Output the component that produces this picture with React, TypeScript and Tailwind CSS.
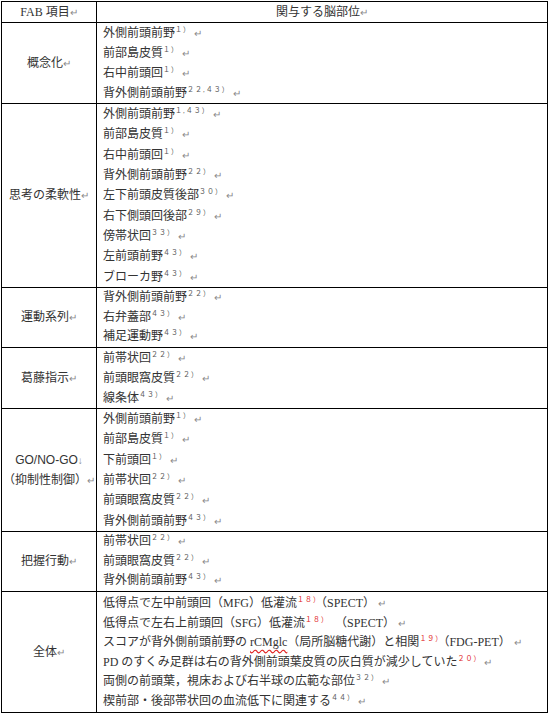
const serif = { fontFamily: '"Liberation Serif", "Noto Sans CJK JP", serif' };

type Item = { text: string; sup: string };

const rows: { label: string; lh: number; items: Item[] }[] = [
  {
    label: "概念化",
    lh: 20,
    items: [
      { text: "外側前頭前野", sup: "１）" },
      { text: "前部島皮質", sup: "１）" },
      { text: "右中前頭回", sup: "１）" },
      { text: "背外側前頭前野", sup: "２２,４３）" },
    ],
  },
  {
    label: "思考の柔軟性",
    lh: 20.33,
    items: [
      { text: "外側前頭前野", sup: "１,４３）" },
      { text: "前部島皮質", sup: "１）" },
      { text: "右中前頭回", sup: "１）" },
      { text: "背外側前頭前野", sup: "２２）" },
      { text: "左下前頭皮質後部", sup: "３０）" },
      { text: "右下側頭回後部", sup: "２９）" },
      { text: "傍帯状回", sup: "３３）" },
      { text: "左前頭前野", sup: "４３）" },
      { text: "ブローカ野", sup: "４３）" },
    ],
  },
  {
    label: "運動系列",
    lh: 19.67,
    items: [
      { text: "背外側前頭前野", sup: "２２）" },
      { text: "右弁蓋部", sup: "４３）" },
      { text: "補足運動野", sup: "４３）" },
    ],
  },
  {
    label: "葛藤指示",
    lh: 20,
    items: [
      { text: "前帯状回", sup: "２２）" },
      { text: "前頭眼窩皮質", sup: "２２）" },
      { text: "線条体", sup: "４３）" },
    ],
  },
  {
    label: "GO",
    lh: 20.33,
    items: [
      { text: "外側前頭前野", sup: "１）" },
      { text: "前部島皮質", sup: "１）" },
      { text: "下前頭回", sup: "１）" },
      { text: "前帯状回", sup: "２２）" },
      { text: "前頭眼窩皮質", sup: "２２）" },
      { text: "背外側前頭前野", sup: "４３）" },
    ],
  },
  {
    label: "把握行動",
    lh: 19.67,
    items: [
      { text: "前帯状回", sup: "２２）" },
      { text: "前頭眼窩皮質", sup: "２２）" },
      { text: "背外側前頭前野", sup: "４３）" },
    ],
  },
];

function Ret() {
  return <span className="ml-[3px] text-[10px] text-[#8a8a8a]">↵</span>;
}

function Mark() {
  return <span className="text-[10px] text-[#8a8a8a]">↵</span>;
}

function Sup({ children, red }: { children: React.ReactNode; red?: boolean }) {
  return (
    <span
      className={`align-super text-[7px] leading-none tracking-[1px] ${red ? "text-[#e02020]" : "text-[#555]"}`}
    >
      {children}
    </span>
  );
}

function Line({ children, lh }: { children: React.ReactNode; lh: number }) {
  // line height differs slightly per row, like the Word table
  return (
    <div className="overflow-visible whitespace-nowrap" style={{ height: lh, lineHeight: `${lh}px` }}>
      {children}
    </div>
  );
}

function Label({ label }: { label: string }) {
  if (label === "GO") {
    return (
      <div className="leading-[20px]">
        <div className="h-[20px]" style={{ fontFamily: '"Liberation Sans", sans-serif' }}>
          GO/NO-GO<span className="text-[10px] text-[#8a8a8a]">↓</span>
        </div>
        <div className="h-[20px] whitespace-nowrap">
          （抑制性制御）
          <Mark />
        </div>
      </div>
    );
  }
  return (
    <div className="h-[20px] leading-[20px]">
      {label}
      <Mark />
    </div>
  );
}

export default function App() {
  return (
    <div className="min-h-[715px] bg-white pt-px pl-px text-[12px] text-[#333]" style={serif}>
      <table className="w-[547px] table-fixed border-collapse border border-black">
        <colgroup>
          <col className="w-[95px]" />
          <col />
        </colgroup>
        <tbody>
          <tr>
            <td className="border border-black p-0 text-center">
              <div className="h-[20px] overflow-hidden leading-[20px]">
                FAB 項目
                <Mark />
              </div>
            </td>
            <td className="border border-black p-0 text-center">
              <div className="h-[20px] overflow-hidden leading-[20px]">
                関与する脳部位
                <Mark />
              </div>
            </td>
          </tr>
          {rows.map((row, i) => (
            <tr key={i}>
              <td className="border border-black p-0 text-center align-middle">
                <Label label={row.label} />
              </td>
              <td className="border border-black py-0 pl-[6px] pr-0">
                {row.items.map((it, j) => (
                  <Line key={j} lh={row.lh}>
                    {it.text}
                    <Sup>{it.sup}</Sup>
                    <Ret />
                  </Line>
                ))}
              </td>
            </tr>
          ))}
          <tr>
            <td className="border border-black p-0 text-center align-middle">
              <div className="h-[20px] leading-[20px]">
                全体
                <Mark />
              </div>
            </td>
            <td className="border border-black pt-[2px] pb-0 pl-[6px] pr-0">
              <Line lh={19.67}>
                低得点で左中前頭回（MFG）低灌流<Sup red>１８）</Sup>（SPECT）
                <Ret />
              </Line>
              <Line lh={19.67}>
                低得点で左右上前頭回（SFG）低灌流<Sup red>１８）</Sup>
                <span className="ml-[12px]">（SPECT）</span>
                <Ret />
              </Line>
              <Line lh={19.67}>
                スコアが背外側前頭前野の{" "}
                <span className="underline decoration-[#e02020] decoration-wavy underline-offset-[3px]">
                  rCMglc
                </span>
                （局所脳糖代謝）と相関<Sup red>１９）</Sup>（FDG-PET）
                <Ret />
              </Line>
              <Line lh={19.67}>
                PD のすくみ足群は右の背外側前頭葉皮質の灰白質が減少していた<Sup red>２０）</Sup>
                <Ret />
              </Line>
              <Line lh={19.67}>
                両側の前頭葉，視床および右半球の広範な部位<Sup>３２）</Sup>
                <Ret />
              </Line>
              <Line lh={19.67}>
                楔前部・後部帯状回の血流低下に関連する<Sup>４４）</Sup>
                <Ret />
              </Line>
            </td>
          </tr>
        </tbody>
      </table>
    </div>
  );
}
